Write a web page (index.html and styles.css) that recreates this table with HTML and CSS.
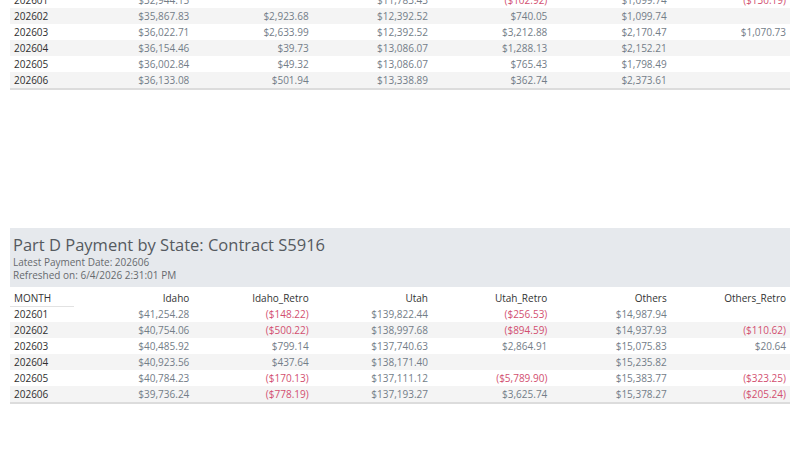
FILE: index.html
```html
<!DOCTYPE html>
<html>
<head>
<meta charset="utf-8">
<link rel="stylesheet" href="styles.css">
</head>
<body>
<section class="view view-top">
  <div class="clip">
    <div class="grid">
      <div class="row">
        <div class="cell month">202601</div>
        <div class="cell num">$32,944.15</div>
        <div class="cell num"></div>
        <div class="cell num">$11,783.43</div>
        <div class="cell num neg">($102.92)</div>
        <div class="cell num">$1,099.74</div>
        <div class="cell num neg">($130.19)</div>
      </div>
      <div class="row alt">
        <div class="cell month">202602</div>
        <div class="cell num">$35,867.83</div>
        <div class="cell num">$2,923.68</div>
        <div class="cell num">$12,392.52</div>
        <div class="cell num">$740.05</div>
        <div class="cell num">$1,099.74</div>
        <div class="cell num"></div>
      </div>
      <div class="row">
        <div class="cell month">202603</div>
        <div class="cell num">$36,022.71</div>
        <div class="cell num">$2,633.99</div>
        <div class="cell num">$12,392.52</div>
        <div class="cell num">$3,212.88</div>
        <div class="cell num">$2,170.47</div>
        <div class="cell num">$1,070.73</div>
      </div>
      <div class="row alt">
        <div class="cell month">202604</div>
        <div class="cell num">$36,154.46</div>
        <div class="cell num">$39.73</div>
        <div class="cell num">$13,086.07</div>
        <div class="cell num">$1,288.13</div>
        <div class="cell num">$2,152.21</div>
        <div class="cell num"></div>
      </div>
      <div class="row">
        <div class="cell month">202605</div>
        <div class="cell num">$36,002.84</div>
        <div class="cell num">$49.32</div>
        <div class="cell num">$13,086.07</div>
        <div class="cell num">$765.43</div>
        <div class="cell num">$1,798.49</div>
        <div class="cell num"></div>
      </div>
      <div class="row alt last">
        <div class="cell month">202606</div>
        <div class="cell num">$36,133.08</div>
        <div class="cell num">$501.94</div>
        <div class="cell num">$13,338.89</div>
        <div class="cell num">$362.74</div>
        <div class="cell num">$2,373.61</div>
        <div class="cell num"></div>
      </div>
    </div>
  </div>
</section>

<section class="view view-bottom">
  <header class="title-box">
    <h1 class="title">Part D Payment by State: Contract S5916</h1>
    <p class="sub">Latest Payment Date: 202606</p>
    <p class="sub">Refreshed on: 6/4/2026 2:31:01 PM</p>
  </header>
  <div class="grid">
    <div class="row head">
      <div class="cell month hmonth">MONTH</div>
      <div class="cell num">Idaho</div>
      <div class="cell num">Idaho_Retro</div>
      <div class="cell num">Utah</div>
      <div class="cell num">Utah_Retro</div>
      <div class="cell num">Others</div>
      <div class="cell num">Others_Retro</div>
    </div>
    <div class="row">
      <div class="cell month">202601</div>
      <div class="cell num">$41,254.28</div>
      <div class="cell num neg">($148.22)</div>
      <div class="cell num">$139,822.44</div>
      <div class="cell num neg">($256.53)</div>
      <div class="cell num">$14,987.94</div>
      <div class="cell num"></div>
    </div>
    <div class="row alt">
      <div class="cell month">202602</div>
      <div class="cell num">$40,754.06</div>
      <div class="cell num neg">($500.22)</div>
      <div class="cell num">$138,997.68</div>
      <div class="cell num neg">($894.59)</div>
      <div class="cell num">$14,937.93</div>
      <div class="cell num neg">($110.62)</div>
    </div>
    <div class="row">
      <div class="cell month">202603</div>
      <div class="cell num">$40,485.92</div>
      <div class="cell num">$799.14</div>
      <div class="cell num">$137,740.63</div>
      <div class="cell num">$2,864.91</div>
      <div class="cell num">$15,075.83</div>
      <div class="cell num">$20.64</div>
    </div>
    <div class="row alt">
      <div class="cell month">202604</div>
      <div class="cell num">$40,923.56</div>
      <div class="cell num">$437.64</div>
      <div class="cell num">$138,171.40</div>
      <div class="cell num"></div>
      <div class="cell num">$15,235.82</div>
      <div class="cell num"></div>
    </div>
    <div class="row">
      <div class="cell month">202605</div>
      <div class="cell num">$40,784.23</div>
      <div class="cell num neg">($170.13)</div>
      <div class="cell num">$137,111.12</div>
      <div class="cell num neg">($5,789.90)</div>
      <div class="cell num">$15,383.77</div>
      <div class="cell num neg">($323.25)</div>
    </div>
    <div class="row alt last">
      <div class="cell month">202606</div>
      <div class="cell num">$39,736.24</div>
      <div class="cell num neg">($778.19)</div>
      <div class="cell num">$137,193.27</div>
      <div class="cell num">$3,625.74</div>
      <div class="cell num">$15,378.27</div>
      <div class="cell num neg">($205.24)</div>
    </div>
  </div>
</section>
</body>
</html>
```

FILE: styles.css
```css
html, body {
  margin: 0;
  padding: 0;
  background: #ffffff;
}

body {
  width: 800px;
  height: 450px;
  overflow: hidden;
  font-family: "Open Sans", "Noto Sans", sans-serif;
  font-size: 10px;
}

.view {
  padding: 0 10px;
}

.view-top .clip {
  height: 90px;
  overflow: hidden;
  display: flex;
  flex-direction: column;
  justify-content: flex-end;
}

.view-bottom {
  margin-top: 138px;
}

.grid {
  display: flex;
  flex-direction: column;
  width: 780px;
}

.row {
  display: grid;
  grid-template-columns: 64px repeat(6, 1fr);
  height: 16px;
  line-height: 16px;
  flex-shrink: 0;
}

.row.alt {
  background: #f4f4f4;
}

.row.last {
  border-bottom: 2px solid #dcdcdc;
}

.cell {
  white-space: nowrap;
  overflow: visible;
}

.cell.month {
  padding-left: 4px;
  color: #2f2f2f;
}

.cell.num {
  text-align: right;
  padding-right: 4px;
  color: #737d88;
}

.cell.neg {
  color: #d24f70;
}

.row.head {
  height: 16px;
  line-height: 16px;
}

.row.head .cell {
  color: #333333;
}

.row.head .hmonth {
  border-bottom: 1px solid #e2e2e2;
  box-sizing: border-box;
}

.title-box {
  background: #e6e9ed;
  height: 59px;
  padding: 6px 3px 0;
  box-sizing: border-box;
  margin-bottom: 3px;
}

.title {
  margin: 0;
  font-weight: normal;
  font-size: 16.5px;
  line-height: 22px;
  color: #555a5f;
}

.sub {
  margin: 0;
  font-size: 10px;
  line-height: 13px;
  color: #666a6e;
}
```
